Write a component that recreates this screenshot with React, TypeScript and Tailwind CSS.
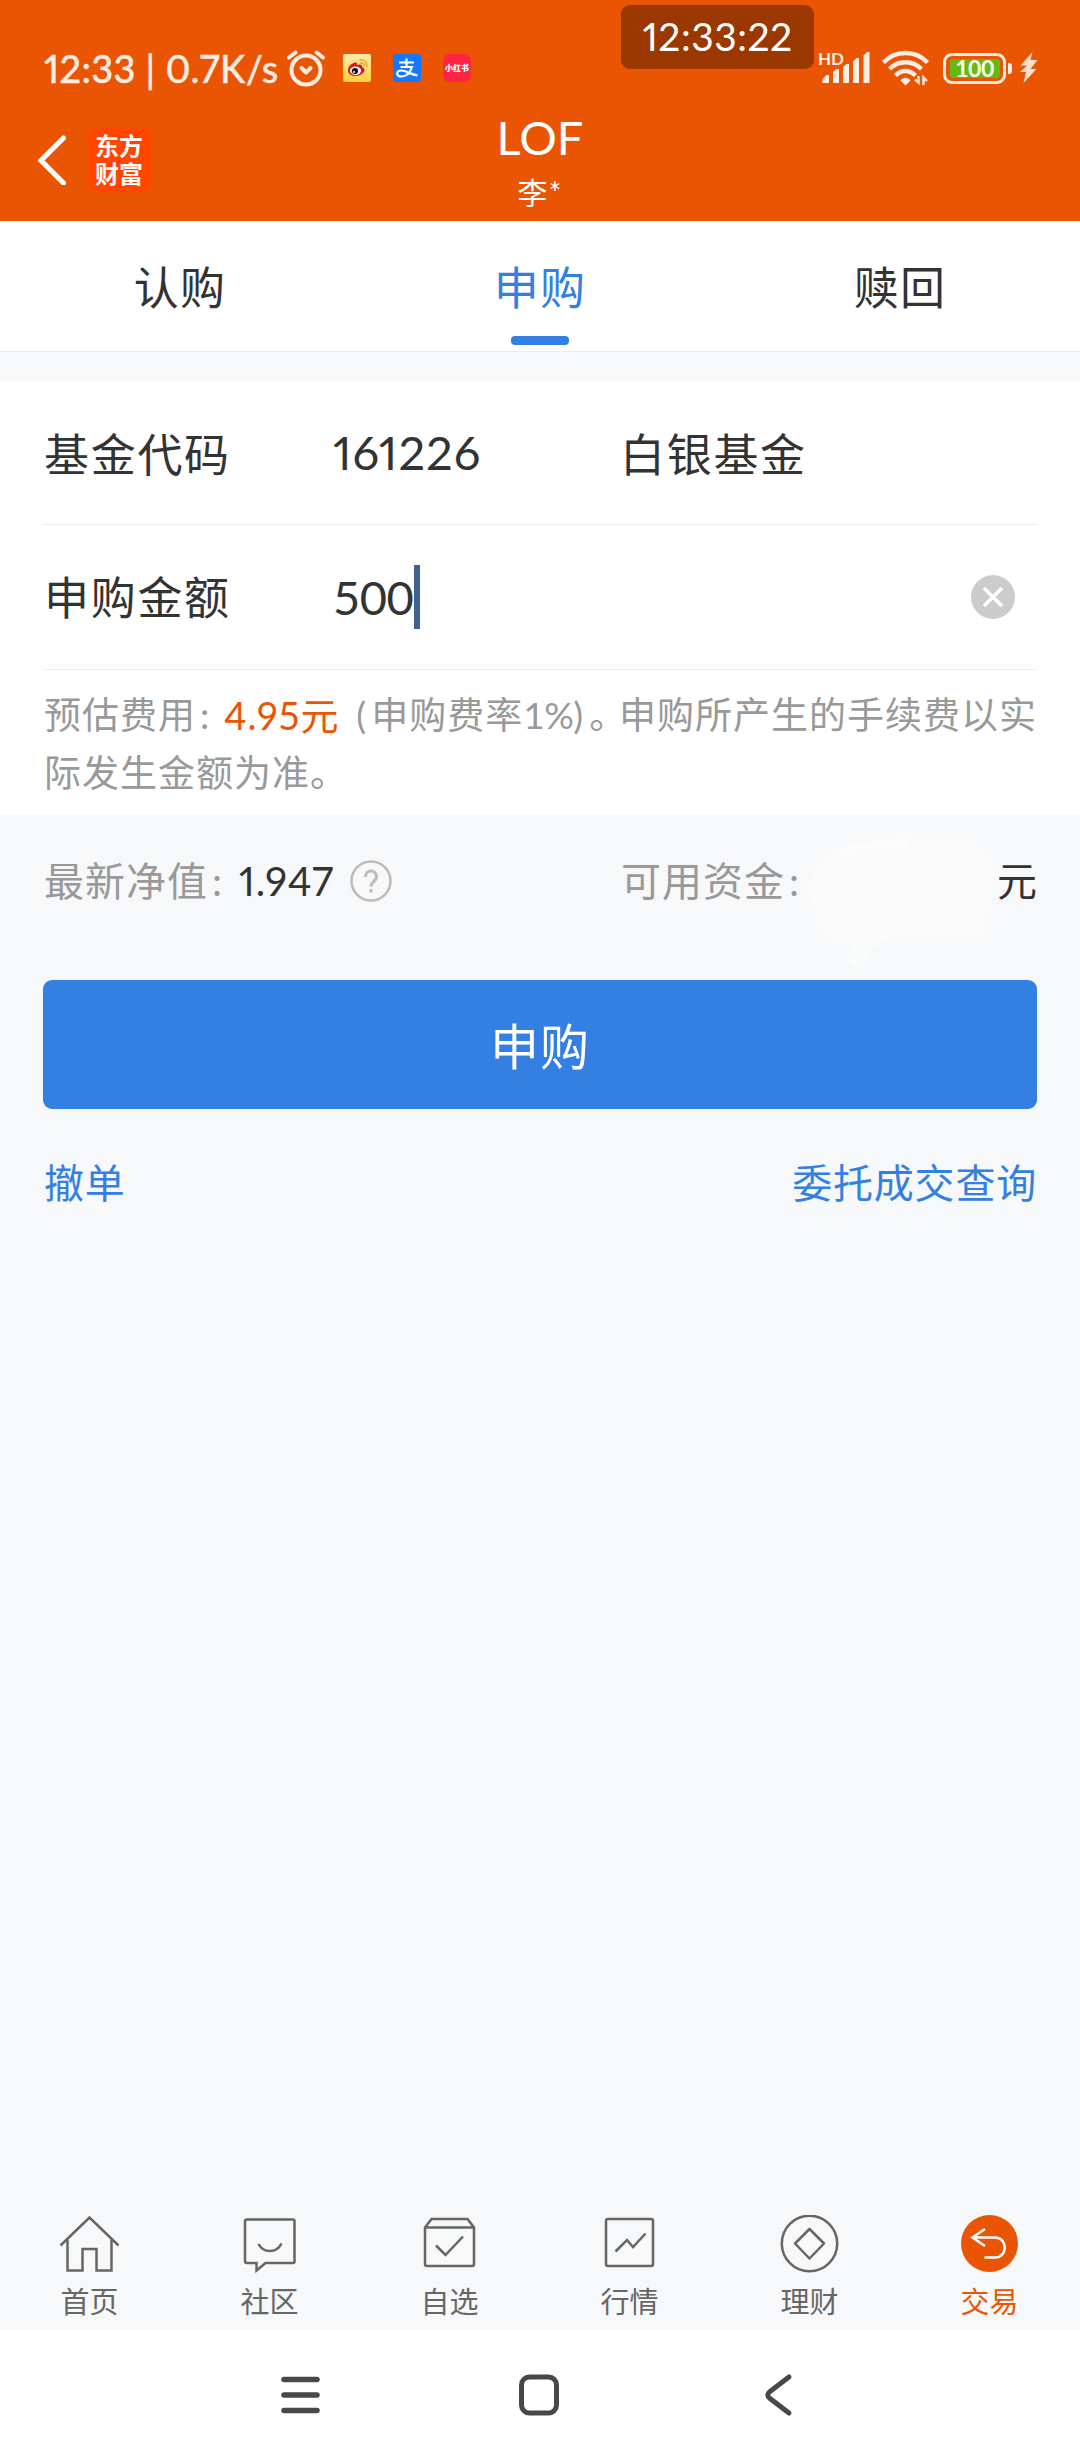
import type { ReactNode } from 'react'

const tabs = [
  { label: '认购', active: false },
  { label: '申购', active: true },
  { label: '赎回', active: false },
]

function AlarmIcon() {
  return (
    <svg width="40" height="38" viewBox="0 0 40 38" fill="none" stroke="#ffede3" strokeWidth="4" strokeLinecap="round">
      <circle cx="20" cy="21" r="14.5" />
      <path d="M3 8.5 9.500 3.500M37 8.500 30.500 3.500" />
      <path d="M15.500 19l4.500 4.500 4.500-4.500" strokeLinejoin="round" />
    </svg>
  )
}

function WeiboIcon() {
  return (
    <svg width="28" height="28" viewBox="0 0 28 28">
      <defs>
        <linearGradient id="weibo" x1="0" y1="0" x2="0" y2="1">
          <stop offset="0" stopColor="#fdebac" />
          <stop offset="1" stopColor="#fdd13a" />
        </linearGradient>
      </defs>
      <rect width="28" height="28" rx="2" fill="url(#weibo)" />
      <path d="M5 16c0-4 5-8 8-7.500 1.500.3 1.300 1.700 1 2.500 2-1 6-1 5 1.800 5 1.700 2 9.200-7 9.200-4 0-7-2.500-7-6z" fill="#d8171f" />
      <ellipse cx="12.500" cy="16.700" rx="5.600" ry="4.200" fill="#fff" />
      <circle cx="12" cy="17" r="3.100" fill="#111" />
      <circle cx="11" cy="18" r="1" fill="#fff" />
      <path d="M17.500 9c2.500-.5 4 1 3.700 3.300M17 6c4-.8 7.500 2 7 6.500" fill="none" stroke="#e9a52f" strokeWidth="1.500" strokeLinecap="round" />
    </svg>
  )
}

function AlipayIcon() {
  return (
    <svg width="28" height="28" viewBox="0 0 28 28" fill="none" stroke="#fff">
      <rect width="28" height="28" rx="3" fill="#1677ff" stroke="none" />
      <path d="M6 8.500h15M13.500 4.500v8.500M7.500 13H19c-2 6-6 9.500-10.500 9.500-6 0-5.500-6 0-6 4.500 0 9 3.700 16 5" strokeWidth="2.200" />
    </svg>
  )
}

function SignalIcon() {
  return (
    <svg width="48" height="32" viewBox="0 0 48 32" fill="#ffede3">
      <path d="M.5 31v-4l4-4H7v8zM11 31V20l3.500-3H17v14zM21 31V15l3.500-3H27v19zM31 31V9.500L34.500 6H37v25zM41.500 31V3.500L45 0h2.500v31z" />
    </svg>
  )
}

function WifiIcon() {
  return (
    <svg width="47" height="36" viewBox="0 0 47 36" fill="none" stroke="#ffede3" strokeWidth="4.400">
      <path d="M1.500 12.500C13-.2 34-.2 45.500 12.500M7.500 19c9-9 23-9 32 0M13.500 25.500c6-6 14-6 20 0" />
      <path d="M23.500 35.500l-5-5c3-3.700 7-3.700 10 0z" fill="#ffede3" stroke="none" />
      <path d="M33 29.500 36.500 32.500V26M45 31l-3.500-3.500V35" strokeWidth="2.400" />
    </svg>
  )
}

function Battery() {
  return (
    <div className="flex items-center">
      <div className="flex h-[31px] w-[63px] items-center justify-center rounded-[9px] border-[3px] border-[#ffede3]">
        <div className="flex h-[19px] w-[50px] items-center justify-center rounded-[3px] bg-[#66b814] text-[23px] leading-none font-bold tracking-[-0.5px] text-[#f4ffe8] tabular-nums">
          100
        </div>
      </div>
      <div className="ml-[2px] h-[11px] w-[4px] rounded-r-[3px] bg-[#ffede3]" />
      <svg className="ml-[7px]" width="19" height="32" viewBox="0 0 19 32" fill="#ffe0d0">
        <path d="M13.500 0 1.500 13.500H8L1 20h6L4.500 31 17.500 17h-6l7-9h-7z" />
      </svg>
    </div>
  )
}

const nav: { label: string; icon: ReactNode; active?: boolean }[] = [
  {
    label: '首页',
    icon: (
      <>
        <path d="M1.500 30.500 30.500 2.500 59.500 30.500" />
        <path d="M8.500 25v30.500H23.500V34h14v21.500h15V25" />
      </>
    ),
  },
  {
    label: '社区',
    icon: (
      <>
        <path d="M8 4.500h46a1.500 1.500 0 0 1 1.500 1.500V46.500A1.500 1.500 0 0 1 54 48H26.500l-9 7.500V48H8a2 2 0 0 1-2-2V6.500a2 2 0 0 1 2-2z" />
        <path d="M19.500 29c5 9.500 18 9.500 23-.5" />
      </>
    ),
  },
  {
    label: '自选',
    icon: (
      <>
        <path d="M6 12.500 12.500 4h36l6.500 8.500V49a2 2 0 0 1-2 2H8a2 2 0 0 1-2-2zM6 12.500h49" />
        <path d="M17 30.500 26.500 40 44 21.500" />
      </>
    ),
  },
  {
    label: '行情',
    icon: (
      <>
        <rect x="7" y="4" width="47" height="47" rx="2" />
        <path d="M16.500 36.500 28 25l6 7 12.500-13.500" />
      </>
    ),
  },
  {
    label: '理财',
    icon: (
      <>
        <circle cx="30.500" cy="28.500" r="27.700" />
        <path d="M30.500 14l14.500 14.500L30.500 43.500 16 28.500z" strokeLinejoin="round" />
      </>
    ),
  },
  {
    label: '交易',
    active: true,
    icon: (
      <>
        <circle cx="30.500" cy="28.500" r="28.500" fill="#ea5504" stroke="none" />
        <path d="M26 14 13.500 22.500 26 31M13.500 22.500h22.500c13 0 13 20 0 20H25.500" stroke="#fff" />
      </>
    ),
  },
]

export default function App() {
  return (
    <div className="flex h-[2460px] w-[1080px] flex-col bg-[#f6f8fa] font-['Lato','Noto_Sans_CJK_SC',sans-serif] text-[#333] proportional-nums">
      <header className="relative h-[221px] bg-[#ea5504] text-white">
        <div className="flex h-[136px] items-center pl-[44px] text-[#ffede3]">
          <span className="w-[242px] text-[38px] font-medium tracking-[0.300px] whitespace-nowrap [-webkit-text-stroke:0.3px]">12:33 | 0.7K/s</span>
          <AlarmIcon />
          <div className="ml-[17px] flex gap-[22px]">
            <WeiboIcon />
            <AlipayIcon />
            <div className="flex size-[28px] items-center justify-center rounded-[7px] bg-[#ff2442] text-[8px] font-black whitespace-nowrap text-white">
              小红书
            </div>
          </div>
          <div className="ml-auto flex items-center pr-[42px]">
            <SignalIcon />
            <div className="mr-[14px] ml-[12px]">
              <WifiIcon />
            </div>
            <Battery />
          </div>
        </div>
        <div className="absolute top-[5px] left-[621px] flex h-[64px] w-[193px] items-center justify-center rounded-[9px] bg-[#9b3802] pb-[1px] text-[39px] tracking-[0.500px]">
          12:33:22
        </div>
        <span className="absolute top-[50px] left-[818px] text-[17px] leading-none font-bold text-[#ffede3]">HD</span>
        <div className="absolute top-[127px] left-[37px] flex items-center gap-[20px]">
          <svg width="30" height="50" viewBox="0 0 30 50" fill="none" stroke="#fff" strokeWidth="5" strokeLinecap="round">
            <path d="M26.500 3 4 25.500l22.500 22.500" />
          </svg>
          <div className="flex size-[65px] items-center justify-center rounded-[14px] bg-[#ff4500] text-[24px] leading-[28px] font-bold">
            <span className="w-[49px]">东方财富</span>
          </div>
        </div>
        <div className="absolute top-[110px] left-0 w-full text-center">
          <div className="text-[47px] leading-[54px]">LOF</div>
          <div className="text-[30px] leading-[56px] tracking-[1px]">李*</div>
        </div>
      </header>

      <div className="flex h-[131px] border-b border-[#ececec] bg-white text-[45px] tracking-[1.2px]">
        {tabs.map((tab) => (
          <div key={tab.label} className={tab.active ? 'relative flex-1 text-center leading-[134px] text-[#3480e2]' : 'flex-1 text-center leading-[134px]'}>
            {tab.label}
            {tab.active && <div className="absolute top-[115px] left-[151px] h-[9px] w-[58px] rounded-[4px] bg-[#3480e2]" />}
          </div>
        ))}
      </div>

      <section className="mt-[29px] h-[434px] bg-white px-[43px]">
        <div className="flex h-[144px] items-center border-b border-[#ececec] pl-[1px] text-[45px]">
          <span className="w-[289px] pt-[6px] tracking-[1.700px]">基金代码</span>
          <span className="w-[287px] text-[47px] tracking-[1px]">161226</span>
          <span className="pt-[6px] tracking-[1.700px]">白银基金</span>
        </div>
        <div className="flex h-[145px] items-center border-b border-[#ececec] pl-[1px] text-[45px]">
          <span className="w-[289px] pt-[4px] tracking-[1.700px]">申购金额</span>
          <span className="w-[81px] text-[47px] tracking-[-0.500px] whitespace-nowrap tabular-nums">500</span>
          <div className="h-[64px] w-[6px] bg-[#42618e]" />
          <svg className="mr-[22px] ml-auto" width="44" height="44" viewBox="0 0 44 44">
            <circle cx="22" cy="22" r="22" fill="#ccc" />
            <path d="M13 13l18 18M31 13 13 31" stroke="#fff" strokeWidth="3.500" />
          </svg>
        </div>
        <div className="pt-[16px] pl-[1px] text-[37px] leading-[58px] tracking-[1px] whitespace-nowrap text-[#999]">
          <div className="flex">
            <span>预估费用</span>
            <span className="w-[28px] pl-[4px]">:</span>
            <span className="w-[133px] text-[38px] text-[#ea5504]">4.95元</span>
            <span className="w-[15px]">(</span>
            <span>申购费率</span>
            <span className="w-[48px] tracking-[-0.500px] tabular-nums">1%</span>
            <span className="w-[18px] pl-[2px]">)</span>
            <span className="w-[30px] tracking-[-10px]">。</span>
            <span>申购所产生的手续费以实</span>
          </div>
          <div>际发生金额为准。</div>
        </div>
      </section>

      <section className="px-[43px]">
        <div className="relative flex h-[132px] items-center pl-[1px] text-[40px] text-[#999]">
          <div className="flex w-[577px] items-center">
            <span className="tracking-[1px]">最新净值</span>
            <span className="w-[31px] pl-[4px]">:</span>
            <span className="w-[111px] tracking-[0.800px] text-[#333]">1.947</span>
            <svg width="42" height="42" viewBox="0 0 42 42" fill="none" stroke="#bbb" strokeWidth="2.500">
              <circle cx="21" cy="21" r="19.500" />
              <path d="M15.500 17c0-8 11-8 11 0 0 4-5.500 4.500-5.500 9.500M21 29v3.500" strokeWidth="3" />
            </svg>
          </div>
          <span className="tracking-[1px]">可用资金</span>
          <span className="pl-[4px]">:</span>
          {/* hand-smeared cover over the balance */}
          <svg className="absolute top-[8px] left-[756px]" width="210" height="152" viewBox="0 0 210 152">
            <g className="blur-[5px]" fill="#fafafa">
              <path d="M14 42C32 20 60 18 85 14c20-6 35-5 55 3 25-4 48 2 52 18 6 25 2 60-8 80-20 10-40-2-60-2-20 0-30 4-45 8-20 6-40 6-50-4C12 100 4 70 14 42z" />
            </g>
            <path d="M68 108l18 4c-12 12-17 20-22 33l-6 3-10-11c5-12 10-21 20-29z" fill="#fafbfb" className="blur-[1px]" />
            <path d="M42 32c18-9 40-12 65-10" fill="none" stroke="#fcfcfc" strokeWidth="6" strokeLinecap="round" className="blur-[2px]" />
          </svg>
          <span className="relative ml-auto text-[#333]">元</span>
        </div>
        <button className="mt-[33px] block h-[129px] w-full rounded-[9px] bg-[#3480e2] pt-[4px] text-[49px] tracking-[1px] text-white">申购</button>
        <div className="mt-[44px] flex justify-between pl-[1px] text-[40px] tracking-[0.800px] text-[#3480e2]">
          <span>撤单</span>
          <span>委托成交查询</span>
        </div>
      </section>

      <nav className="mt-auto flex h-[125px] pt-[10px]">
        {nav.map((item) => (
          <div key={item.label} className={item.active ? 'flex flex-1 flex-col items-center text-[#ea5504]' : 'flex flex-1 flex-col items-center text-[#666]'}>
            <svg className="shrink-0" width="62" height="60" viewBox="0 0 62 60" fill="none" stroke="#666" strokeWidth="2.500">
              {item.icon}
            </svg>
            <span className="mt-[5px] pr-[1px] text-[29px] leading-[43px]">{item.label}</span>
          </div>
        ))}
      </nav>

      <div className="flex h-[130px] items-center bg-white pl-[278px]">
        <svg width="44" height="44" viewBox="0 0 44 44" stroke="#484848" strokeWidth="5.500" strokeLinecap="round">
          <path d="M6 6.500h33M6 22h33M6 37.500h33" />
        </svg>
        <svg className="ml-[195px]" width="44" height="44" viewBox="0 0 44 44" fill="none" stroke="#484848" strokeWidth="5">
          <rect x="4.500" y="4" width="35" height="36" rx="8" />
        </svg>
        <svg className="ml-[201px]" width="32" height="44" viewBox="0 0 32 44" fill="none" stroke="#484848" strokeWidth="5" strokeLinecap="round">
          <path d="M27 4 8 18.500q-4.500 3.500 0 7L27 40" />
        </svg>
      </div>
    </div>
  )
}
